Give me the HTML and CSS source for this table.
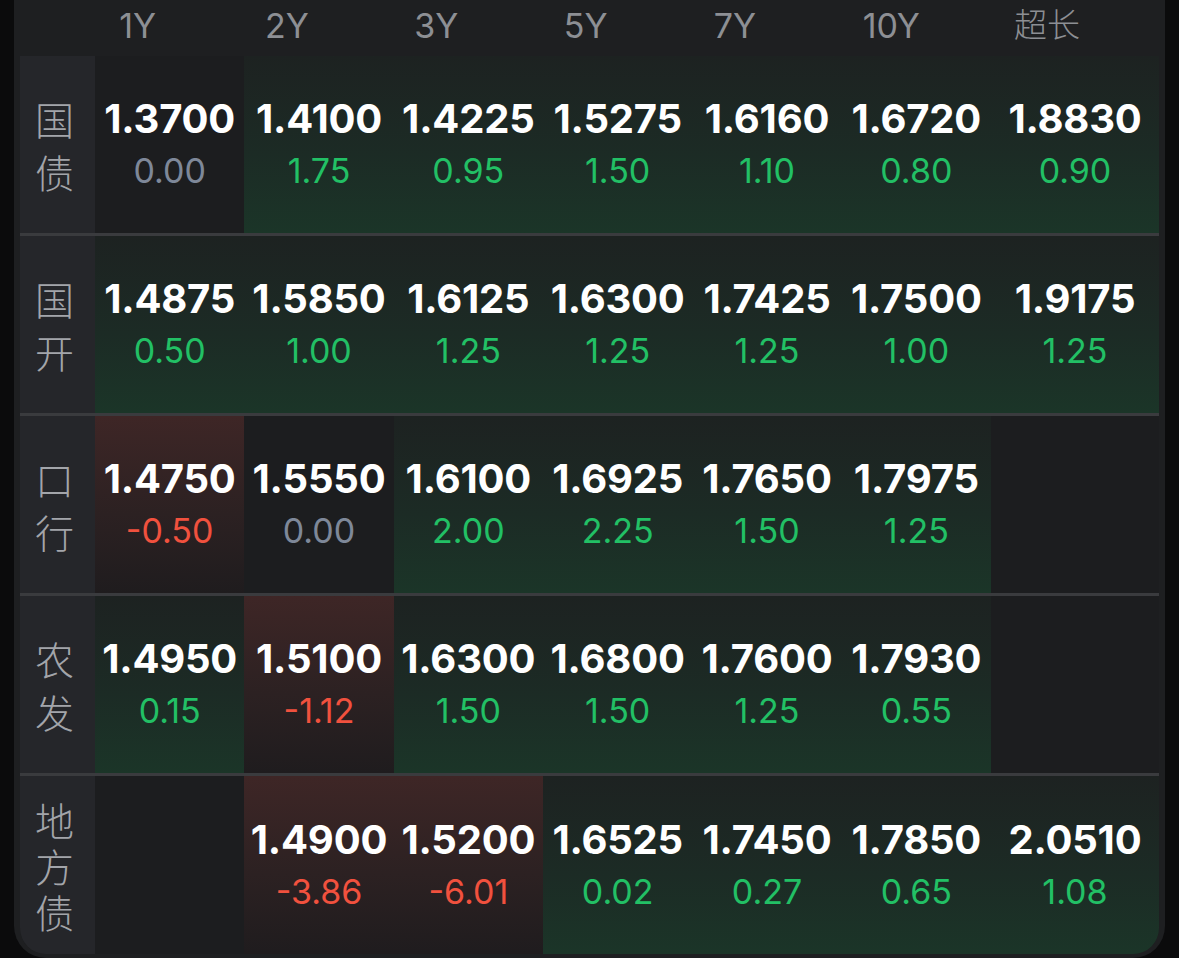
FILE: index.html
```html
<!DOCTYPE html>
<html lang="zh">
<head>
<meta charset="utf-8">
<title>Yield curve</title>
<link rel="stylesheet" href="styles.css">
</head>
<body>
<div class="panel">
  <div class="head">
    <div></div>
    <div class="hc">1Y</div>
    <div class="hc">2Y</div>
    <div class="hc">3Y</div>
    <div class="hc">5Y</div>
    <div class="hc">7Y</div>
    <div class="hc hc-10">10Y</div>
    <div class="hc hc-long">超长</div>
  </div>
  <div class="table">
    <div class="row">
      <div class="label"><span class="lt">国债</span></div>
      <div class="cell"><div class="v">1.3700</div><div class="d flat">0.00</div></div>
      <div class="cell up"><div class="v">1.4100</div><div class="d pos">1.75</div></div>
      <div class="cell up"><div class="v">1.4225</div><div class="d pos">0.95</div></div>
      <div class="cell up"><div class="v">1.5275</div><div class="d pos">1.50</div></div>
      <div class="cell up"><div class="v">1.6160</div><div class="d pos">1.10</div></div>
      <div class="cell up"><div class="v">1.6720</div><div class="d pos">0.80</div></div>
      <div class="cell up"><div class="v">1.8830</div><div class="d pos">0.90</div></div>
    </div>
    <div class="row sep">
      <div class="label"><span class="lt">国开</span></div>
      <div class="cell up"><div class="v">1.4875</div><div class="d pos">0.50</div></div>
      <div class="cell up"><div class="v">1.5850</div><div class="d pos">1.00</div></div>
      <div class="cell up"><div class="v">1.6125</div><div class="d pos">1.25</div></div>
      <div class="cell up"><div class="v">1.6300</div><div class="d pos">1.25</div></div>
      <div class="cell up"><div class="v">1.7425</div><div class="d pos">1.25</div></div>
      <div class="cell up"><div class="v">1.7500</div><div class="d pos">1.00</div></div>
      <div class="cell up"><div class="v">1.9175</div><div class="d pos">1.25</div></div>
    </div>
    <div class="row sep">
      <div class="label"><span class="lt">口行</span></div>
      <div class="cell down"><div class="v">1.4750</div><div class="d neg">-0.50</div></div>
      <div class="cell"><div class="v">1.5550</div><div class="d flat">0.00</div></div>
      <div class="cell up"><div class="v">1.6100</div><div class="d pos">2.00</div></div>
      <div class="cell up"><div class="v">1.6925</div><div class="d pos">2.25</div></div>
      <div class="cell up"><div class="v">1.7650</div><div class="d pos">1.50</div></div>
      <div class="cell up"><div class="v">1.7975</div><div class="d pos">1.25</div></div>
      <div class="cell"></div>
    </div>
    <div class="row sep">
      <div class="label"><span class="lt">农发</span></div>
      <div class="cell up"><div class="v">1.4950</div><div class="d pos">0.15</div></div>
      <div class="cell down"><div class="v">1.5100</div><div class="d neg">-1.12</div></div>
      <div class="cell up"><div class="v">1.6300</div><div class="d pos">1.50</div></div>
      <div class="cell up"><div class="v">1.6800</div><div class="d pos">1.50</div></div>
      <div class="cell up"><div class="v">1.7600</div><div class="d pos">1.25</div></div>
      <div class="cell up"><div class="v">1.7930</div><div class="d pos">0.55</div></div>
      <div class="cell"></div>
    </div>
    <div class="row sep last">
      <div class="label"><span class="lt lt3">地方债</span></div>
      <div class="cell"></div>
      <div class="cell down"><div class="v">1.4900</div><div class="d neg">-3.86</div></div>
      <div class="cell down"><div class="v">1.5200</div><div class="d neg">-6.01</div></div>
      <div class="cell up"><div class="v">1.6525</div><div class="d pos">0.02</div></div>
      <div class="cell up"><div class="v">1.7450</div><div class="d pos">0.27</div></div>
      <div class="cell up"><div class="v">1.7850</div><div class="d pos">0.65</div></div>
      <div class="cell up"><div class="v">2.0510</div><div class="d pos">1.08</div></div>
    </div>
  </div>
</div>
</body>
</html>
```
FILE: styles.css
```css
html, body {
  margin: 0;
  padding: 0;
  background: #0b0b0c;
  height: 958px;
  overflow: hidden;
}
body {
  font-family: Inter, "Noto Sans CJK SC", sans-serif;
}
.panel {
  margin-left: 14px;
  width: 1139px;
  padding: 0 6px 4px 6px;
  background: #1e1f21;
  border-radius: 0 0 32px 32px;
}
.head, .row {
  display: grid;
  grid-template-columns: 75px repeat(6, 1fr) 168px;
}
.head {
  height: 56px;
  background: #1e1f21;
}
.hc {
  color: #8d8f94;
  font-size: 34px;
  line-height: 51px;
  text-align: center;
  padding-right: 64px;
  font-family: Inter, "Noto Sans CJK SC", sans-serif;
}
.hc-10 { padding-right: 50px; }
.hc-long { padding-right: 56px; font-size: 33px; font-weight: 300; }
.table {
  border-radius: 0 0 26px 26px;
  overflow: hidden;
  background: #1c1d1f;
}
.row {
  height: 177px;
}
.row.sep {
  border-top: 3px solid #3a3b3e;
}
.row.last {
  height: 178px;
}
.label {
  background: #25262a;
  display: flex;
  align-items: center;
  justify-content: center;
  padding-right: 6px;
}
.lt {
  display: block;
  width: 40px;
  font-family: "Noto Sans CJK SC", sans-serif;
  font-size: 39px;
  font-weight: 300;
  line-height: 53px;
  color: #a3a5aa;
  text-align: center;
}
.lt3 { line-height: 46px; }
.cell {
  background: #1c1d1f;
  display: flex;
  flex-direction: column;
  justify-content: center;
  align-items: center;
  padding-top: 1px;
}
.cell.up {
  background: linear-gradient(to bottom, #1d2221 0%, #1c2b25 55%, #1b3528 100%);
}
.cell.down {
  background: linear-gradient(to bottom, #3e2626 0%, #2c2122 55%, #1f1c1e 100%);
}
.v {
  color: #ffffff;
  font-size: 40px;
  font-weight: 700;
  line-height: 52px;
  letter-spacing: -0.2px;
}
.d {
  font-size: 34px;
  line-height: 52px;
}
.pos { color: #22c065; }
.neg { color: #f1513e; }
.flat { color: #7e8899; }
```
